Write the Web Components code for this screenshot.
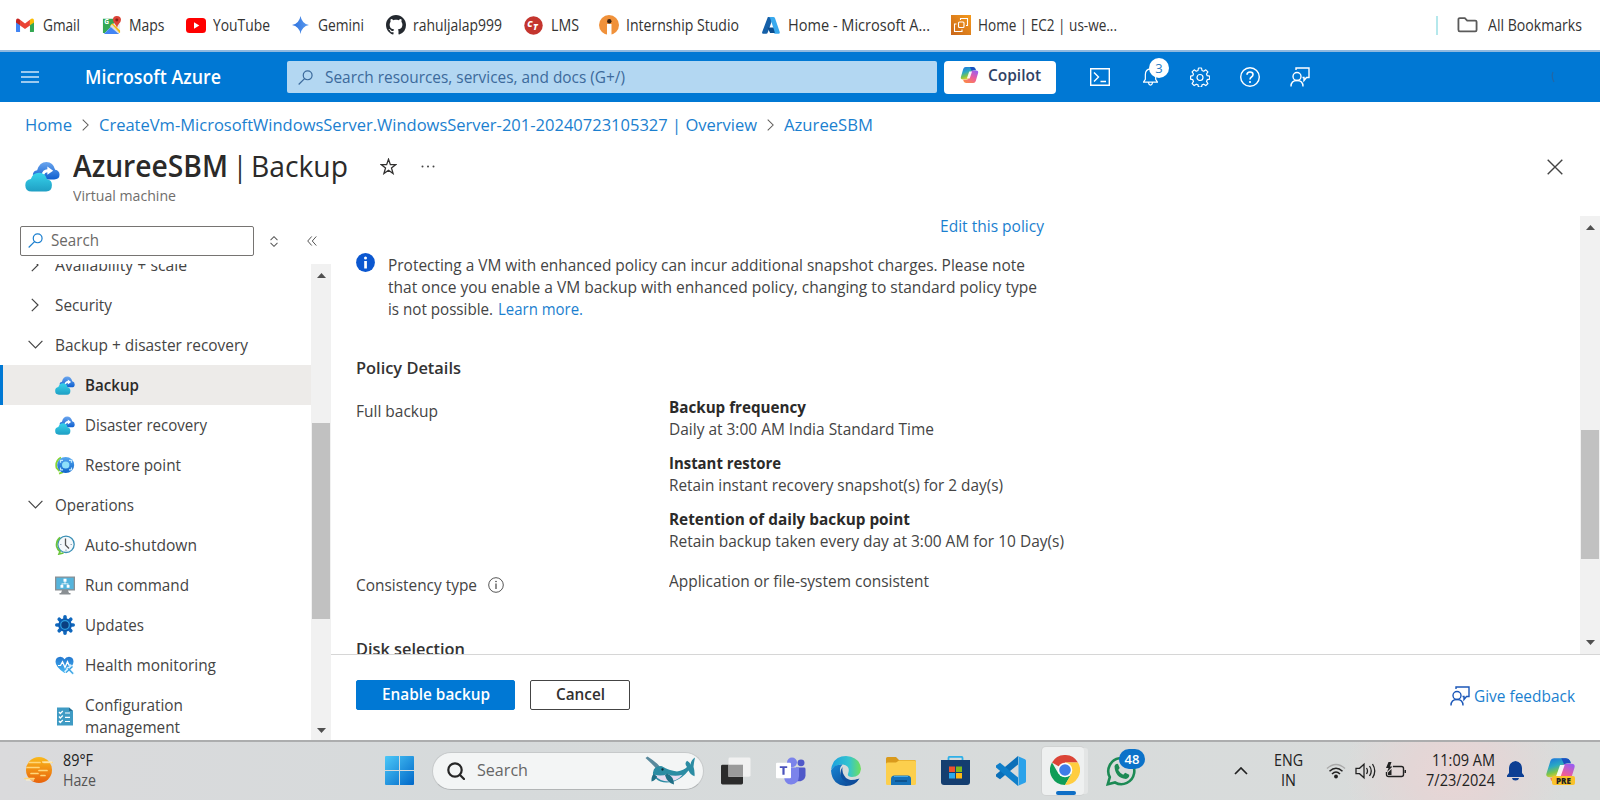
<!DOCTYPE html>
<html lang="en">
<head>
<meta charset="utf-8">
<title>AzureeSBM | Backup - Microsoft Azure</title>
<style>
html,body{margin:0;padding:0;overflow:hidden;background:#fff}
body{font:16.3px/22px "Open Sans","Noto Sans",sans-serif;color:#3b3a39}
</style>
</head>
<body>
<app-screen></app-screen>
<script>
const COPILOT = `<defs><linearGradient id="a" x1="0" y1="0" x2=".4" y2="1"><stop offset="0" stop-color="#1b6fe0"/><stop offset=".45" stop-color="#2aa9c4"/><stop offset=".75" stop-color="#7fc54a"/><stop offset="1" stop-color="#f3cf2c"/></linearGradient><linearGradient id="b" x1=".8" y1="0" x2=".2" y2="1"><stop offset="0" stop-color="#9b5df0"/><stop offset=".5" stop-color="#ee5c9a"/><stop offset="1" stop-color="#fb8a45"/></linearGradient></defs><path fill="url(#a)" d="M6 1h7.500q2 0 2.700 2l.5 1.600h-2q-2 0-2.600 2L10 13.500Q9.400 15 7.600 15H3Q.2 15 1 12L3.400 3.200Q4 1 6 1z"/><path fill="#1a4fc0" d="M10.500 1h3q2 0 2.700 2l.5 1.600h-2q-1.500 0-2.300 1z"/><path fill="url(#b)" d="M14 19H6.500q-2 0-2.700-2l-.5-1.600h3.500q2 0 2.600-2L11.500 6.500Q12 5 13.500 5H17q2.800 0 2 3L16.600 16.800Q16 19 14 19z"/><path fill="#fff" d="M9.700 6h3l-2.500 8h-3z" opacity=".9"/>`;
const FEEDBACK = c => `<g fill="none" stroke="${c}" stroke-width="1.400"><circle cx="7" cy="9.500" r="4"/><path d="M1 19.500C1 15.500 3.500 13.500 7 13.500s6 2 6 6M6 3V1h13v9.500h-2.500L14 13.500v-3h-1.500"/></g>`;
const CLOUDS = `<defs><linearGradient id="a" x1="0" y1="0" x2="0" y2="1"><stop offset="0" stop-color="#6aa5ee"/><stop offset="1" stop-color="#0f5fd0"/></linearGradient><linearGradient id="b" x1="0" y1="0" x2="0" y2="1"><stop offset="0" stop-color="#37d3ec"/><stop offset="1" stop-color="#1f9fc4"/></linearGradient></defs><path fill="url(#a)" d="M8 14q.5-4 4.500-4.500Q15 1 22 1t9 8q4.500.8 4.500 5.200 0 4.800-5.500 4.800H17z"/><path d="M17 14q1-5 6-5.500V5.700l6 4.300-6 4.300V11.500q-2.500 0-3.500 3z" fill="#fff"/><path fill="url(#b)" d="M7 31.500Q.3 31.500.3 25q0-5.500 5.700-6.300Q8 12 14.500 12t8.200 6.800q5 .8 5 6 0 6.700-6 6.700z"/>`;
const ICONS = {
 gmail:['0 0 20 16',`<path fill="#4285f4" d="M0 3v12q0 1 1 1h3.500V7z"/><path fill="#34a853" d="M15.500 16H19q1 0 1-1V3l-4.500 4z"/><path fill="#ea4335" d="M4.500 8.500V2L10 6.300 15.500 2v6.500L10 12.700z"/><path fill="#c5221f" d="M0 3q0-3 3-2.200l1.500 1.300v6.300L0 5z"/><path fill="#fbbc04" d="M20 3q0-3-3-2.200l-1.500 1.300v6.300L20 5z"/>`],
 maps:['0 0 20 20',`<path fill="#34a853" d="M1 3h13l-1 5L3 19H1z"/><path fill="#e8eaed" d="M9 10l9 9h1V9l-4-2z"/><path fill="#fbbc04" d="M11 8l8 8v2.500h-2L8.500 11z"/><path fill="#4285f4" d="M2 20l7.500-8L18 20z"/><path fill="#ddd" d="M8.500 11.500l2-2L18 18l-1 1.500z"/><text x="2.500" y="9" font-size="7" font-weight="700" fill="#fff" font-family="Open Sans">G</text><path fill="#db4437" d="M15.500 0q4.500.2 4.500 4.300 0 2.700-2.500 5-1 1.200-1.700 3.700-.8-2.500-2-3.900-2.300-2-2.300-4.800Q11.500.2 15.500 0z"/><circle cx="15.600" cy="4.500" r="1.600" fill="#8c1f16"/>`],
 youtube:['0 0 20 15',`<rect width="20" height="15" rx="3.500" fill="#f00"/><path d="M8 4.300v6.400l5.300-3.200z" fill="#fff"/>`],
 gemini:['0 0 20 20',`<defs><linearGradient id="a" x1="0" x2="1"><stop offset="0" stop-color="#2a6fdc"/><stop offset="1" stop-color="#5d9cf0"/></linearGradient></defs><path fill="url(#a)" d="M10 0q1.500 8.500 10 10-8.500 1.500-10 10Q8.500 11.500 0 10 8.500 8.500 10 0z"/>`],
 github:['0 0 16 16',`<path fill="#24292f" fill-rule="evenodd" d="M8 0C3.580 0 0 3.580 0 8c0 3.540 2.290 6.530 5.470 7.590.4.070.55-.17.55-.38 0-.19-.01-.82-.01-1.490-2.010.37-2.530-.49-2.690-.94-.09-.23-.48-.94-.82-1.130-.28-.15-.68-.52-.01-.53.63-.01 1.080.58 1.230.82.72 1.210 1.870.87 2.330.66.070-.52.28-.87.51-1.070-1.780-.2-3.640-.89-3.640-3.950 0-.87.31-1.590.82-2.150-.08-.2-.36-1.020.08-2.120 0 0 .67-.21 2.200.82.64-.18 1.320-.27 2-.27s1.360.09 2 .27c1.530-1.040 2.200-.82 2.200-.82.44 1.100.16 1.920.08 2.120.51.56.82 1.270.82 2.150 0 3.070-1.870 3.750-3.650 3.950.29.25.54.73.54 1.480 0 1.070-.01 1.930-.01 2.200 0 .21.15.46.55.38A8.010 8.010 0 0 0 16 8c0-4.420-3.580-8-8-8z"/>`],
 lms:['0 0 20 20',`<circle cx="10" cy="10" r="9.700" fill="#c4352e"/><text x="3.500" y="11.500" font-size="9" font-weight="800" font-style="italic" fill="#fff" font-family="Open Sans">C</text><text x="9.500" y="15" font-size="9" font-weight="800" font-style="italic" fill="#fff" font-family="Open Sans">T</text>`],
 intern:['0 0 20 20',`<circle cx="10" cy="10" r="10" fill="#f0913a"/><path fill="#fff" d="M8 9h4.500v11H8z"/><circle cx="10.300" cy="6.200" r="2.200" fill="#3a2414"/>`],
 azure:['0 0 20 20',`<path fill="#1560a8" d="M6.500 1h6L6.500 17q-.5 1.700-2 1.700H1.200Q-.4 18.500.3 16.700z"/><path fill="#0a4d8f" d="M6 12h9l2 6H9z"/><path fill="#38a9ee" d="M7.500 1h5.200q1.200 0 1.700 1.200l5.300 14.600q.4 1.900-1.300 1.900h-5.200q1.300-.3.9-1.900L9 2.200Q8.600 1.200 7.500 1z"/>`],
 ec2:['0 0 20 20',`<defs><linearGradient id="a" x1="0" y1="1" x2="1" y2="0"><stop offset="0" stop-color="#c8661a"/><stop offset="1" stop-color="#f59a1c"/></linearGradient></defs><path fill="url(#a)" d="M0 0h20v20H0z"/><g fill="none" stroke="#fff" stroke-width="1.100"><rect x="7.500" y="7" width="5.500" height="5.500" rx="1"/><path d="M9.500 5V3.500h7V10.500h-1.500M5.500 9H3.500V16.500h7.500V14.500"/></g>`],
 folder:['0 0 22 17',`<path fill="none" stroke="#5a5a5a" stroke-width="1.900" d="M1.500 13.500v-11q0-1.300 1.400-1.300h5.300l2.500 2.600h8.400q1.400 0 1.400 1.300v8.800q0 1.400-1.400 1.400H2.900q-1.400 0-1.400-1.800z"/>`],
 burger:['0 0 18 12',`<path d="M0 1h18M0 6h18M0 11h18" stroke="#cfe5f7" stroke-width="1.300"/>`],
 mag:['0 0 16 16',`<g fill="none" stroke="currentColor" stroke-width="1.300"><circle cx="10.300" cy="5.700" r="4.700"/><path d="M7 9.200L.7 15.500"/></g>`],
 copilot:['0 0 20 20',COPILOT],
 shell:['0 0 20 18',`<path fill="none" stroke="#fff" stroke-width="1.400" d="M.7.7h18.600v16.600H.7zM4 4.500l4.500 4.500L4 13.500M10.500 13.500h5.500"/>`],
 bell:['0 0 16 19',`<path fill="none" stroke="#fff" stroke-width="1.300" d="M.5 15h15l-2-3V7q0-5.500-5.500-6Q2.500 1.500 2.500 7v5zM5.800 15.500q.5 2.500 2.200 2.500t2.200-2.500"/>`],
 gear:['0 0 20 20',`<path fill="none" stroke="#fff" stroke-width="1.200" stroke-linejoin="round" d="M8.500 1h3l.5 2.500 1.700.7 2.100-1.400 2.100 2.100-1.400 2.100.7 1.700 2.500.5v3l-2.500.5-.7 1.700 1.400 2.100-2.100 2.100-2.100-1.400-1.700.7-.5 2.300h-3L8 17.900l-1.700-.7-2.100 1.400-2.100-2.100 1.400-2.100-.7-1.700L.6 12.200v-3l2.200-.5.7-1.700L2.100 4.900l2.100-2.100 2.100 1.400L8 3.500z"/><circle cx="10" cy="10.500" r="3" fill="none" stroke="#fff" stroke-width="1.200"/>`],
 help:['0 0 20 20',`<circle cx="10" cy="10" r="9.300" fill="none" stroke="#fff" stroke-width="1.400"/><path fill="none" stroke="#fff" stroke-width="1.600" d="M7 7.800Q7 5 10 5t3 2.500q0 1.500-1.500 2.500T10 12.500"/><circle cx="10" cy="15" r="1.100" fill="#fff"/>`],
 fbw:['0 0 20 20',FEEDBACK('#fff')], fbb:['0 0 20 20',FEEDBACK('#1b57b8')],
 right:['0 0 8 14',`<path fill="none" stroke="currentColor" stroke-width="1.200" d="M.8.800L7 7 .8 13.200"/>`],
 down:['0 0 15 9',`<path fill="none" stroke="currentColor" stroke-width="1.200" d="M.6.800L7.500 7.800 14.400.800"/>`],
 up:['0 0 14 8',`<path fill="none" stroke="#222" stroke-width="1.700" d="M1 7l6-6 6 6"/>`],
 clouds:['0 0 36 32',CLOUDS],
 star:['0 0 20 20',`<path fill="none" stroke="#323130" stroke-width="1.500" d="M10 1.500l2.200 6.300h6.500l-5.200 4 1.900 6.500L10 14.500l-5.400 3.800 1.900-6.500-5.200-4h6.500z"/>`],
 dots:['0 0 14 3',`<g fill="#444"><circle cx="1.500" cy="1.500" r="1"/><circle cx="7" cy="1.500" r="1"/><circle cx="12.500" cy="1.500" r="1"/></g>`],
 close:['0 0 16 16',`<path stroke="#444" stroke-width="1.400" d="M.7.700l14.600 14.600M15.300.700L.7 15.300"/>`],
 updown:['0 0 9 11',`<path fill="none" stroke="#555" stroke-width="1.100" d="M.6 4.200L4.500.7l3.900 3.500M.6 6.800l3.900 3.500 3.900-3.500"/>`],
 collapse:['0 0 11 11',`<path fill="none" stroke="#555" stroke-width="1.100" d="M5.200.5L.8 5.500l4.400 5M10.200.5L5.800 5.500l4.400 5"/>`],
 restore:['0 0 20 20',`<defs><linearGradient id="a" x1="0" y1="0" x2="0" y2="1"><stop offset="0" stop-color="#55a8f0"/><stop offset="1" stop-color="#0d63c9"/></linearGradient></defs><path d="M6 1.500Q0 5 1.500 12.500l3 3.500M4 18.500l4-1.500" fill="none" stroke="#86d633" stroke-width="1.800"/><circle cx="10.700" cy="9.500" r="8.500" fill="url(#a)"/><circle cx="10.700" cy="9.500" r="3.700" fill="#8fe0fa"/><path fill="none" stroke="#bfe8ff" stroke-width="1.300" d="M5.500 7V4.500H8M14 4.500h2.500V7M16.500 12v2.500H14M8 14.500H5.500V12"/>`],
 clock:['0 0 20 20',`<circle cx="11" cy="9.300" r="8.200" fill="#f4f8fb" stroke="#3a8fb5" stroke-width="1.300"/><path d="M5 2.500Q.8 6 1.700 11.500 2.500 14.500 5 16.500L4 19l4.500-1" fill="none" stroke="#6bc53c" stroke-width="1.700"/><path d="M10.500 3.500v6.500l3.500 3.500" fill="none" stroke="#555" stroke-width="1.300"/><path d="M5 9.500h1.500M15.500 9.500H17M11 14.500V16" stroke="#9ab"/>`],
 run:['0 0 20 19',`<path fill="#8a8f93" d="M0 .5h20v14H0zM7 14.500h6l1 2.500h1.500v1.500h-11V17H6z"/><path fill="#55b4dc" d="M1.300 1.700h17.400v11.500H1.300z"/><g fill="#fff"><path d="M8.500 2.800h3v3h-3zM5.500 9h2.800v2.800H5.500zM11.700 9h2.800v2.800h-2.800z"/><path d="M9.600 5.500h.8v2h3V9.500h-.8V8.300H7.400v1.200h-.8v-2h3z"/></g>`],
 updates:['0 0 20 20',`<path stroke="#0f67bd" stroke-width="3.600" stroke-linecap="round" d="M10 1.800v16.400M1.800 10h16.400M4.200 4.200l11.600 11.600M15.800 4.200L4.200 15.800"/><circle cx="10" cy="10" r="6.800" fill="#0c5bb0"/><circle cx="10" cy="10" r="4.300" fill="#0a3f80" stroke="#2f9fdc" stroke-width="1.200"/>`],
 health:['0 0 20 20',`<defs><linearGradient id="a" x1="0" y1="0" x2="0" y2="1"><stop offset="0" stop-color="#2477cf"/><stop offset="1" stop-color="#46b7f3"/></linearGradient></defs><path fill="url(#a)" d="M9.500 18Q.5 11.500.5 6 .8 1 5.300.800 8.300.800 9.500 3.500 10.800.800 14 .800q4.300.2 4.500 5.200Q18.500 11.500 9.500 18z"/><path d="M3 10h2.500L7.500 6l2.500 6 2.500-6 1.500 3.500h2" fill="none" stroke="#fff" stroke-width="1.300"/><path d="M10 17l7-7M12 12l6.500 7" stroke="#d6f0ff" stroke-width="2.800"/><path d="M11 17.500l6.500-6.500M13 13l5 5.500" stroke="#34a0e2" stroke-width="1.400"/>`],
 config:['0 0 20 19',`<path fill="#3f9bc4" d="M2 .5h12L18 4v14.500H2z"/><path fill="#256f96" d="M14 .5V4h4z"/><g fill="none" stroke="#fff" stroke-width="1.200"><path d="M4 5l1.300 1.500L7.800 4M4 9.500L5.300 11l2.500-2.500M4 14l1.300 1.500L7.800 13M10 6h5M10 10.300h5M10 14.500h5"/></g>`],
 info:['0 0 19 19',`<circle cx="9.500" cy="9.500" r="9.400" fill="#0b57d0"/><path fill="#fff" d="M8.200 8h2.700v7.500H8.200z"/><circle cx="9.500" cy="4.900" r="1.500" fill="#fff"/>`],
 infoo:['0 0 16 16',`<circle cx="8" cy="8" r="7.300" fill="none" stroke="#555" stroke-width="1"/><path stroke="#444" stroke-width="1.200" d="M8 6.500v5.500"/><circle cx="8" cy="4.500" r=".8" fill="#444"/>`],
 aup:['0 0 9 5',`<path fill="#505050" d="M4.500 0L9 5H0z"/>`], adown:['0 0 9 5',`<path fill="#505050" d="M4.500 5L9 0H0z"/>`],
 haze:['0 0 30 28',`<defs><linearGradient id="a" x1="0" y1="0" x2="0" y2="1"><stop offset="0" stop-color="#f9b91c"/><stop offset="1" stop-color="#e8620c"/></linearGradient></defs><circle cx="15" cy="14" r="13" fill="url(#a)"/><g stroke="#ffd77a" stroke-width="1.700" stroke-linecap="round"><path d="M5 6.500h11M20 6.500h8M3 11.500h12M15 14.500h8M7 17.500h7M17 19.500h4M1 22.500h9"/></g><path d="M2 24h8M18 6h10" stroke="#fff1c9" stroke-width="1"/>`],
 win:['0 0 29 29',`<defs><linearGradient id="a" gradientUnits="userSpaceOnUse" x1="0" y1="0" x2="29" y2="29"><stop offset="0" stop-color="#4cc8f8"/><stop offset="1" stop-color="#0067c8"/></linearGradient></defs><path fill="url(#a)" d="M1 0h13v14H0V1q0-1 1-1zM15 0h13q1 0 1 1v13H15zM0 15h14v14H1q-1 0-1-1zM15 15h14v13q0 1-1 1H15z"/>`],
 tmag:['0 0 18 18',`<g fill="none" stroke="#262626" stroke-width="2.200" stroke-linecap="round"><circle cx="8" cy="8" r="6.700"/><path d="M13 13l4 4"/></g>`],
 whale:['0 0 50 30',`<path d="M.5 2l2-1.500Q11 6 15 11l-3 3Q7 8 .5 2z" fill="#5a8a9d"/><path fill="#2b8ca3" d="M8 17q1-7 9-6.500 7 4.500 15 5.500 7-1 10-4.500Q39 8 42 5q3 1.500 3.500 4Q46 4 50 1.500q-1 5-1.500 9.500 1.500 5 1 10-4.500-2-6-6-6 8-14 11-12 4-19-3-3-1-2.500-6z"/><path fill="#e6dcf0" d="M9.500 19.500q8 1.500 13-1 6 3.500 15 1-5 6.500-14 7-9 0-14-7z"/><path fill="#1f6f86" d="M22 18q7 3 7 11.500-7-2-9-9.500zM12 21q-1 4-5.500 5.500-.5-5 2-8z"/><circle cx="17.500" cy="14" r="1.200" fill="#0b2b35"/>`],
 task:['0 0 30 29',`<rect x="0" y="8" width="22" height="20.500" rx="1.500" fill="#2b2b2b"/><path d="M7.500 2q0-1.500 1.500-1.500h19q1.500 0 1.500 1.500v17q0 1.500-1.500 1.500H7.500z" fill="#f1f1f1"/><path d="M7.500 8H22v12.500H7.500z" fill="#9a9a9a"/>`],
 teams:['0 0 30 29',`<circle cx="16" cy="5.500" r="5" fill="#7b83eb"/><circle cx="25" cy="6" r="3.500" fill="#5059c9"/><path fill="#5059c9" d="M20 11h8q1.500 0 1.500 1.500V19q0 5-5 6h-5z"/><path fill="#7b83eb" d="M8 11h15v9q-.5 8-7.500 8.500T8 20z"/><rect y="6" width="15" height="16" rx="1" fill="#fff"/><path fill="#4b53bc" d="M3.800 9.500h7.400v2H8.600V18.500H6.400v-7H3.800z"/>`],
 edge:['0 0 30 30',`<defs><linearGradient id="a" x1="0" x2="1"><stop offset="0" stop-color="#1ba0e0"/><stop offset=".6" stop-color="#34c4cf"/><stop offset="1" stop-color="#6fe05a"/></linearGradient><linearGradient id="b" x1="0" y1="0" x2="1" y2="1"><stop offset="0" stop-color="#1787d6"/><stop offset="1" stop-color="#0c3f8c"/></linearGradient></defs><path fill="url(#a)" d="M0 14Q2 0 15 0q14 1 15 13-1 8-9 8-5-.5-4-3Q20 10 12 8.500 4 8.500 0 14z"/><path fill="url(#b)" d="M0 14.500Q3 8 11.500 8.500 7 13 10 19q5 8 18.500 3.500Q24 30 15 30 1 29 0 14.500z"/><path fill="#0f4f9f" d="M11.500 11Q7 17 12 24q6 6 16-1-8 3-13-1-4.500-5-3.500-11z"/>`],
 files:['0 0 30 28',`<path fill="#d99a1c" d="M0 1.500Q0 0 1.500 0H10l3 3h15.500Q30 3 30 4.500V9H0z"/><path fill="#fccf4d" d="M0 7q0-1.500 1.500-1.500H10l3-2h15.500Q30 3.500 30 5v21.500q0 1.500-1.500 1.500h-27Q0 28 0 26.500z"/><path fill="#1470b8" d="M5 28v-6q0-3.500 3.500-3.500h13Q25 18.500 25 22v6z"/><path stroke="#0b4c84" stroke-width="1.600" d="M9 24h12"/><path stroke="#3fa9ea" d="M8 19.500h14"/>`],
 store:['0 0 29 29',`<path fill="none" stroke="#2fb0e8" stroke-width="1.800" d="M7.500 6V2q0-1.200 1.200-1.200h11.600q1.200 0 1.200 1.200v4"/><path fill="#143e70" d="M0 4h29v22q0 3-3 3H3q-3 0-3-3z"/><path fill="#f0512d" d="M8 10.500h6v5.500H8z"/><path fill="#7fba1c" d="M15 10.500h6v5.500h-6z"/><path fill="#27a8ec" d="M8 17h6v5.500H8z"/><path fill="#ffb914" d="M15 17h6v5.500h-6z"/>`],
 vscode:['0 0 30 30',`<path fill="#0a6fb8" d="M22 0v8.500L4 23.300 0 20.500v-2z"/><path fill="#0f7fca" d="M22 30v-8.500L4 6.700 0 9.500v2z"/><path fill="#2ba2ea" d="M21.500 0L29 3.300q1 .5 1 1.500v20.400q0 1-1 1.500L21.500 30q1-.5 1-2V2q0-1.500-1-2z"/>`],
 chrome:['0 0 30 30',`<path fill="#db4437" d="M15 15L2 7.500A15 15 0 0 1 28 7.500H15z"/><path fill="#0f9d58" d="M15 15l-6.500 3.700L2 7.500A15 15 0 0 0 15 30l6.500-11.300z"/><path fill="#ffcd40" d="M15 7.500h13A15 15 0 0 1 15 30l6.500-11.300z"/><circle cx="15" cy="15" r="7.300" fill="#fff"/><circle cx="15" cy="15" r="5.800" fill="#3f7de8"/>`],
 whatsapp:['0 0 30 30',`<path fill="none" stroke="#1c8a54" stroke-width="2.600" d="M1.800 28.200l2-7A13 13 0 1 1 9 26.500z"/><path fill="#1c8a54" d="M8.500 10q1.500-3 3.500-2l1.700 4-1.500 2q2 3.500 5 4.800l2-2 4 2q.5 3-3.200 4.200Q9 22 8.500 10z"/>`],
 wifi:['0 0 20 16',`<g fill="none" stroke="#222" stroke-width="1.500"><path d="M1 5.500q9-8 18 0" stroke="#aaa"/><path d="M3.500 8.300q6.500-6 13 0M6 11q4-4 8 0"/></g><circle cx="10" cy="13.500" r="1.900" fill="#222"/>`],
 speaker:['0 0 21 18',`<g fill="none" stroke="#222" stroke-width="1.300"><path d="M1 6.300h3.500L9 2.300v13.400l-4.500-4H1zM11.500 6q2 3 0 6M14.500 4q3.500 5 0 10M17.500 2q4.500 7 0 14"/></g>`],
 battery:['0 0 21 17',`<path fill="none" stroke="#222" stroke-width="1.400" d="M8 4.500h8.500q2 0 2 2v6q0 2-2 2H3.500q-2 0-2-2V10"/><path fill="#222" d="M19.500 8h1.500v3h-1.500zM3.500 0L1 6h2.500L2 10l5.500-5.500H5L6.500 0zM3 13V10.500L6.500 7v6z"/>`],
 tbell:['0 0 17 20',`<path fill="#0d3f93" d="M0 14.500L2 12V7q.5-6 6.500-7 6 1 6.500 7v5l2 2.500v1.500H0zM5 17h7q-.5 2.500-3.500 2.500T5 17z"/>`],
 smudge:['0 0 4 12',`<path d="M2 1q-2 5 1 10" fill="none" stroke="#315f91" stroke-width="1.200" opacity=".7"/>`]
};
const define = (n, html, setup) => customElements.define(n, class extends HTMLElement {
  connectedCallback(){
    if(this.shadowRoot) return;
    this.attachShadow({mode:'open'}).innerHTML = typeof html==='function' ? html(this) : html;
    if(setup) setup(this);
  }
});
// Single-line label condensed or stretched to a given width.
define('ui-text', `<style>:host{display:inline-block;white-space:nowrap;flex:none;text-align:left}span{display:inline-block;transform-origin:0 50%}</style><span><slot></slot></span>`, el=>{
  const w=+el.getAttribute('w'), s=el.shadowRoot.querySelector('span');
  if(!w) return;
  const n=s.getBoundingClientRect().width;
  el.style.width=w+'px';
  s.style.transform=`scaleX(${w/n})`;
});
define('ui-icon', el=>{const [vb,b]=ICONS[el.getAttribute('name')];
  return `<style>:host{display:block;flex:none;width:${el.getAttribute('w')}px;height:${el.getAttribute('h')}px}svg{display:block;width:100%;height:100%}</style><svg viewBox="${vb}" preserveAspectRatio="none">${b}</svg>`});
define('bookmark-item', el=>`<style>:host{display:flex;align-items:center;flex:none;margin-left:${el.getAttribute('gap')||0}px}ui-text{margin:0 0 1px ${el.getAttribute('pad')}px;color:#333;font-size:15.800px}</style>
  <ui-icon name="${el.getAttribute('icon')}" w="${el.getAttribute('iw')}" h="${el.getAttribute('ih')}"></ui-icon><ui-text w="${el.getAttribute('w')}"><slot></slot></ui-text>`);
define('bookmark-bar', `<style>:host{display:flex;align-items:center;height:50px;border-bottom:2px solid #8fb9df;padding:0 18px 0 16px;box-sizing:content-box}.sp{flex:1}.div{width:2px;height:19px;background:#b5e8ec;margin-right:19px}</style>
<bookmark-item icon="gmail" iw="18" ih="14" pad="9" w="37">Gmail</bookmark-item>
<bookmark-item icon="maps" iw="19" ih="18" pad="7.500" w="35.500" gap="22">Maps</bookmark-item>
<bookmark-item icon="youtube" iw="20" ih="15" pad="7" w="57" gap="22">YouTube</bookmark-item>
<bookmark-item icon="gemini" iw="17" ih="18" pad="9" w="46" gap="22">Gemini</bookmark-item>
<bookmark-item icon="github" iw="20" ih="20" pad="7" w="89" gap="22">rahuljalap999</bookmark-item>
<bookmark-item icon="lms" iw="19" ih="19" pad="8" w="28" gap="22">LMS</bookmark-item>
<bookmark-item icon="intern" iw="20" ih="20" pad="7" w="113" gap="20">Internship Studio</bookmark-item>
<bookmark-item icon="azure" iw="18" ih="19" pad="8" w="142" gap="23">Home - Microsoft A...</bookmark-item>
<bookmark-item icon="ec2" iw="20" ih="20" pad="7" w="139" gap="21">Home | EC2 | us-we...</bookmark-item>
<span class="sp"></span><span class="div"></span>
<bookmark-item icon="folder" iw="21" ih="16" pad="10" w="94">All Bookmarks</bookmark-item>`);
define('azure-header', `<style>:host{display:flex;align-items:center;height:50px;background:#0078d4;box-sizing:border-box;padding-left:21px}
.brand{color:#fff;font-weight:600;font-size:19.500px;margin-left:46px}
.search{display:flex;align-items:center;margin-left:66px;width:650px;height:32px;border-radius:2px;background:#b3d7f2;color:#3c6a9c;padding-left:11px;box-sizing:border-box}
.search ui-text{margin-left:12px}
.cop{display:flex;align-items:center;margin-left:7px;width:112px;height:33px;border-radius:4px;background:#fff;box-sizing:border-box;padding:0 0 4px 16px;color:#2f4266;font-weight:600;font-size:17px}
.cop ui-text{margin-left:9px}
.b{position:relative;margin-left:33px}.b i{position:absolute;left:6px;top:-10px;width:20px;height:20px;border-radius:50%;background:#fff;color:#2b7cc4;font:normal 13px/20px "Open Sans",sans-serif;text-align:center}
</style><ui-icon name="burger" w="18" h="12"></ui-icon>
<ui-text class="brand" w="136">Microsoft Azure</ui-text>
<div class="search"><ui-icon name="mag" w="15" h="15"></ui-icon><ui-text w="300">Search resources, services, and docs (G+/)</ui-text></div>
<div class="cop"><ui-icon name="copilot" w="19" h="18"></ui-icon><ui-text w="53">Copilot</ui-text></div>
<ui-icon name="shell" w="20" h="18" style="margin-left:34px"></ui-icon>
<div class="b"><ui-icon name="bell" w="15" h="18"></ui-icon><i>3</i></div>
<ui-icon name="gear" w="20" h="20" style="margin-left:32px"></ui-icon>
<ui-icon name="help" w="20" h="20" style="margin-left:30px"></ui-icon>
<ui-icon name="fbw" w="20" h="20" style="margin-left:30px"></ui-icon>
<ui-icon name="smudge" w="4" h="12" style="margin-left:241px"></ui-icon>`);
define('blade-header', `<style>:host{display:block;height:114px;color:#605e5c;position:relative}
.crumbs{display:flex;align-items:center;padding:12px 0 0 25px;height:22px}.crumbs ui-text{color:#1b7fcf}
.t{display:flex;align-items:center;height:40px;padding:10px 37px 0 25px}
.t ui-text{font-size:30px;line-height:40px;color:#2b2a29}.sp{flex:1}.bar{width:2px;height:29px;margin:4px 0 0 12px;background:#444}
.sub{padding:0 0 0 73px;font-size:15.300px;line-height:18px;color:#706e6c}</style>
<div class="crumbs"><ui-text w="47">Home</ui-text><ui-icon name="right" w="7" h="12" style="margin:0 10px"></ui-icon><ui-text w="658">CreateVm-MicrosoftWindowsServer.WindowsServer-201-20240723105327 | Overview</ui-text><ui-icon name="right" w="7" h="12" style="margin:0 10px"></ui-icon><ui-text w="89">AzureeSBM</ui-text></div>
<div class="t"><ui-icon name="clouds" w="35" h="31" style="margin-top:20px"></ui-icon><ui-text w="155" style="font-weight:600;margin-left:13px">AzureeSBM</ui-text><ui-text w="14" style="margin-left:5px">|</ui-text><ui-text w="97" style="margin-left:4px">Backup</ui-text>
<ui-icon name="star" w="17" h="17" style="margin:1px 0 0 32px"></ui-icon><ui-icon name="dots" w="14" h="3" style="margin:0 0 0 24px"></ui-icon><span class="sp"></span><ui-icon name="close" w="16" h="16" style="margin-top:1px"></ui-icon></div>
<div class="sub"><ui-text w="103">Virtual machine</ui-text></div>`);
define('scroll-bar', el=>`<style>:host{display:flex;flex-direction:column;align-items:center;flex:none;width:20px;background:#f1f1f1;box-sizing:border-box;padding:${el.getAttribute('pad')}}
.thumb{width:18px;height:${el.getAttribute('size')}px;margin-top:${el.getAttribute('offset')}px;background:#c1c1c1}.sp{flex:1}</style>
<ui-icon name="aup" w="9" h="5"></ui-icon><div class="thumb"></div><span class="sp"></span><ui-icon name="adown" w="9" h="5"></ui-icon>`);
define('nav-group', el=>`<style>:host{display:flex;align-items:center;height:40px;flex:none;padding-left:${el.hasAttribute('open')?28:31}px;color:#444}ui-icon{margin-bottom:1px}ui-text{margin-left:${el.hasAttribute('open')?12:16}px}</style>
<ui-icon name="${el.hasAttribute('open')?'down':'right'}" w="${el.hasAttribute('open')?15:8}" h="${el.hasAttribute('open')?9:14}"></ui-icon><ui-text w="${el.getAttribute('w')}"><slot></slot></ui-text>`);
define('nav-item', el=>`<style>:host{display:flex;align-items:center;min-height:40px;flex:none;padding-left:55px;color:#444}:host([active]){background:#edebe9;box-shadow:inset 3px 0 #0078d4;font-weight:600;color:#2b2a29}div{margin-left:10px;display:flex;flex-direction:column}</style>
<ui-icon name="${el.getAttribute('icon')}" w="20" h="${el.getAttribute('ih')||19}"></ui-icon><div>${el.getAttribute('label').split('|').map((t,i)=>`<ui-text w="${el.getAttribute('w').split('|')[i]}">${t}</ui-text>`).join('')}</div>`);
define('side-nav', `<style>:host{display:flex;flex-direction:column;width:331px;flex:none;height:524px}
.top{display:flex;align-items:center;height:30px;padding:10px 0 8px 20px;flex:none}
.s{display:flex;align-items:center;box-sizing:border-box;width:234px;height:30px;border:1px solid #767472;border-radius:2px;padding:0 0 2px 7px;color:#1b7fcf}
.s ui-text{margin-left:8px;color:#6b6967}
.b{display:flex;flex:1;min-height:0}.l{flex:1;display:flex;flex-direction:column;overflow:hidden}.l>:first-child{margin-top:-19px}</style>
<div class="top"><div class="s"><ui-icon name="mag" w="15" h="15"></ui-icon><ui-text w="48">Search</ui-text></div><ui-icon name="updown" w="8" h="11" style="margin-left:16px"></ui-icon><ui-icon name="collapse" w="10" h="10" style="margin-left:29px"></ui-icon></div>
<div class="b"><div class="l">
<nav-group w="132">Availability + scale</nav-group><nav-group w="57">Security</nav-group>
<nav-group open w="193">Backup + disaster recovery</nav-group>
<nav-item icon="clouds" active label="Backup" w="54"></nav-item>
<nav-item icon="clouds" label="Disaster recovery" w="122"></nav-item>
<nav-item icon="restore" label="Restore point" w="96"></nav-item>
<nav-group open w="79">Operations</nav-group>
<nav-item icon="clock" ih="20" label="Auto-shutdown" w="112"></nav-item>
<nav-item icon="run" label="Run command" w="104"></nav-item>
<nav-item icon="updates" ih="20" label="Updates" w="59"></nav-item>
<nav-item icon="health" label="Health monitoring" w="131"></nav-item>
<nav-item icon="config" style="padding-top:9px" label="Configuration|management" w="98|95"></nav-item>
</div><scroll-bar pad="9px 0 7px" offset="145" size="196"></scroll-bar></div>`);
define('policy-fact', el=>`<style>:host{display:flex;flex-direction:column;margin-bottom:12px}b{font-weight:700;font-size:16px;color:#2b2a29}</style><b><ui-text w="${el.getAttribute('hw')}">${el.getAttribute('head')}</ui-text></b><ui-text w="${el.getAttribute('w')}"><slot></slot></ui-text>`);
define('backup-pane', `<style>:host{display:flex;flex-direction:column;flex:1;height:524px;color:#444}
.m{display:flex;height:438px;border-bottom:1px solid #d6d6d6}.c{flex:1;overflow:hidden;padding-left:25px}
.lk{color:#1b7fcf}.e{margin:-1px 0 0 584px;display:flex}
.note{display:flex;margin-top:17px}.note div{margin-left:13px;display:flex;flex-direction:column}
h3{margin:37px 0 0;font:inherit;font-weight:600;color:#333;font-size:17px;display:flex}
.g{display:grid;grid-template-columns:313px 1fr;margin-top:17px}.k{padding-top:4px;display:flex;align-items:center;height:22px}
.f{flex:1;display:flex;align-items:center;padding:0 25px 6px}
button{box-sizing:border-box;height:30px;padding:0 0 1px;font:600 16.300px/20px "Open Sans",sans-serif;border:1px solid #444;border-radius:2px;background:#fff;color:#323130;width:100px}
.p{background:#0078d4;border-color:#0078d4;color:#fff;width:159px;margin-right:15px}.sp{flex:1}</style>
<div class="m"><div class="c"><div class="e lk"><ui-text w="104">Edit this policy</ui-text></div>
<div class="note"><ui-icon name="info" w="19" h="19" style="margin-top:-1px"></ui-icon><div><ui-text w="637">Protecting a VM with enhanced policy can incur additional snapshot charges. Please note</ui-text><ui-text w="649">that once you enable a VM backup with enhanced policy, changing to standard policy type</ui-text><span><ui-text w="105">is not possible.</ui-text><ui-text class="lk" w="85" style="margin-left:5px">Learn more.</ui-text></span></div></div>
<h3><ui-text w="105">Policy Details</ui-text></h3>
<div class="g"><div class="k"><ui-text w="82">Full backup</ui-text></div><div>
<policy-fact head="Backup frequency" hw="137" w="265">Daily at 3:00 AM India Standard Time</policy-fact>
<policy-fact head="Instant restore" hw="112" w="334">Retain instant recovery snapshot(s) for 2 day(s)</policy-fact>
<policy-fact head="Retention of daily backup point" hw="241" w="395">Retain backup taken every day at 3:00 AM for 10 Day(s)</policy-fact></div>
</div><div class="g" style="margin-top:6px"><div class="k"><ui-text w="121">Consistency type</ui-text><ui-icon name="infoo" w="16" h="16" style="margin-left:11px"></ui-icon></div><ui-text w="260">Application or file-system consistent</ui-text></div>
<h3 style="margin-top:42px"><ui-text w="109">Disk selection</ui-text></h3></div>
<scroll-bar pad="9px 0 9px" offset="200" size="129"></scroll-bar></div>
<div class="f"><button class="p"><ui-text w="108">Enable backup</ui-text></button><button><ui-text w="49">Cancel</ui-text></button><span class="sp"></span><ui-icon name="fbb" w="20" h="20" style="margin-top:2px"></ui-icon><ui-text class="lk" w="101" style="margin:3px 0 0 4px">Give feedback</ui-text></div>`);
define('task-bar', `<style>:host{display:flex;align-items:center;height:60px;box-sizing:border-box;border-top:2px solid #acadae;padding:0 24px 1px 24px;background:radial-gradient(ellipse 110px 90px at 1455px 30px,#e9d5d5 0,#e3d6d6 40%,rgba(217,219,220,0) 100%),linear-gradient(90deg,#dadadc,#d6dadb 30%,#d9dcdb);color:#222}
.w{display:flex;flex-direction:column;line-height:20px;font-size:15.800px;margin-bottom:2px}
.s{display:flex;align-items:center;box-sizing:border-box;width:272px;height:38px;border-radius:19px;background:#f3f5f5;border:1px solid #c6c9ca;border-bottom-color:#b2b5b6;margin-left:18px;padding:0 8px 0 14px;color:#666}
.ch{position:relative;display:flex;justify-content:center;align-items:center;width:42px;height:48px;background:#eef0f0;border-radius:4px;margin-left:16px;box-shadow:5px 0 0 -1px #e3e5e5,0 0 0 1px #d0d2d2}
.ch i{position:absolute;bottom:0;left:14px;width:20px;height:4px;border-radius:2px;background:#0f6fc6}
.wa{position:relative;margin-left:22px}.wa i{position:absolute;left:13px;top:-7px;width:26px;height:20px;border-radius:10px;background:#0b72c9;color:#fff;font:normal 600 13px/20px "Open Sans",sans-serif;text-align:center}
.pre{position:relative}.pre i{position:absolute;left:7px;top:19px;width:23px;height:9px;border-radius:2px;background:#f9c22b;color:#222;font:normal 800 8px/9px "Open Sans",sans-serif;text-align:center}
.sp{flex:1}</style>
<ui-icon name="haze" w="30" h="28" style="margin-top:-2px"></ui-icon>
<div class="w" style="margin-left:9px"><ui-text w="30">89°F</ui-text><ui-text w="33" style="color:#555">Haze</ui-text></div>
<ui-icon name="win" w="29" h="29" style="margin-left:289px"></ui-icon>
<div class="s"><ui-icon name="tmag" w="18" h="18"></ui-icon><ui-text w="51" style="margin:0 0 2px 12px">Search</ui-text><span class="sp"></span><ui-icon name="whale" w="50" h="29"></ui-icon></div>
<ui-icon name="task" w="30" h="28" style="margin-left:17px"></ui-icon>
<ui-icon name="teams" w="30" h="28" style="margin-left:25px"></ui-icon>
<ui-icon name="edge" w="30" h="30" style="margin-left:25px"></ui-icon>
<ui-icon name="files" w="30" h="28" style="margin-left:25px"></ui-icon>
<ui-icon name="store" w="29" h="29" style="margin-left:25px"></ui-icon>
<ui-icon name="vscode" w="30" h="30" style="margin-left:26px"></ui-icon>
<div class="ch"><ui-icon name="chrome" w="30" h="30" style="margin:-2px 0 0 4px"></ui-icon><i></i></div>
<div class="wa"><ui-icon name="whatsapp" w="30" h="30"></ui-icon><i>48</i></div><span class="sp"></span>
<ui-icon name="up" w="14" h="8"></ui-icon>
<div class="w" style="margin-left:26px;align-items:center"><ui-text w="29">ENG</ui-text><ui-text w="15">IN</ui-text></div>
<ui-icon name="wifi" w="20" h="16" style="margin-left:23px"></ui-icon>
<ui-icon name="speaker" w="21" h="18" style="margin-left:9px"></ui-icon>
<ui-icon name="battery" w="21" h="17" style="margin-left:9px"></ui-icon>
<div class="w" style="margin-left:20px;align-items:flex-end"><ui-text w="63">11:09 AM</ui-text><ui-text w="69">7/23/2024</ui-text></div>
<ui-icon name="tbell" w="17" h="20" style="margin-left:12px"></ui-icon>
<div class="pre" style="margin-left:21px"><ui-icon name="copilot" w="31" h="27"></ui-icon><i>PRE</i></div>`);
define('app-screen', `<style>:host{display:flex;flex-direction:column;width:1600px;height:800px;overflow:hidden}main{display:flex;height:524px;flex:none}bookmark-bar,azure-header,blade-header{flex:none}</style>
<bookmark-bar></bookmark-bar><azure-header></azure-header><blade-header></blade-header><main><side-nav></side-nav><backup-pane></backup-pane></main><task-bar></task-bar>`);
</script>
</body>
</html>
